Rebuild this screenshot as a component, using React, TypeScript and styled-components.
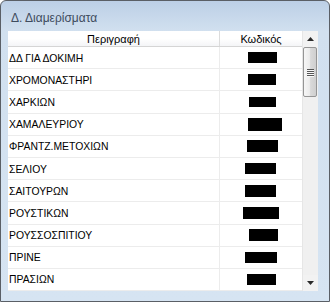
import React from "react";
import styled, { createGlobalStyle } from "styled-components";

const Global = createGlobalStyle`
  html, body { margin: 0; padding: 0; background: #ffffff; overflow: hidden; }
  * { box-sizing: border-box; }
`;

const Window = styled.div`
  width: 330px;
  height: 302px;
  border: 1px solid #5a5f66;
  border-radius: 6px 6px 0 0;
  background: linear-gradient(to bottom, #bccfe6 0px, #d1e0ef 30px, #d6e4f2 100%);
  display: flex;
  flex-direction: column;
  overflow: hidden;
`;

const TitleBar = styled.div`
  height: 30px;
  display: flex;
  align-items: center;
  padding-left: 10px;
  padding-top: 4px;
`;

const Title = styled.span`
  font-family: "Liberation Sans", Arial, sans-serif;
  font-size: 12px;
  color: #3f4c5e;
`;

const Body = styled.div`
  flex: 1;
  display: flex;
  padding: 0 11px 10px 7px;
  min-height: 0;
`;

const Client = styled.div`
  flex: 1;
  display: flex;
  background: #ffffff;
  min-height: 0;
  overflow: hidden;
`;

const Grid = styled.div`
  flex: 1;
  display: flex;
  flex-direction: column;
  min-width: 0;
  overflow: hidden;
`;

const HeaderRow = styled.div`
  height: 16px;
  display: flex;
  background: linear-gradient(to bottom, #ffffff 0%, #ffffff 50%, #f4f5f7 100%);
  border-bottom: 1px solid #d5d5d5;
  flex-shrink: 0;
`;

const HeaderCell = styled.div<{ $w?: number }>`
  ${(p) => (p.$w ? `width: ${p.$w}px;` : "flex: 1;")}
  display: flex;
  align-items: center;
  justify-content: center;
  padding-top: 1px;
  font-family: "Liberation Sans", Arial, sans-serif;
  font-size: 11px;
  color: #000;
  border-right: 1px solid #dcdcdc;
  &:last-child { border-right: none; }
`;

const Row = styled.div`
  height: 22.2px;
  flex-shrink: 0;
  display: flex;
  border-bottom: 1px solid #ececec;
`;

const DescCell = styled.div`
  width: 212px;
  display: flex;
  align-items: center;
  padding-left: 1px;
  padding-top: 1px;
  font-family: "Liberation Sans", Arial, sans-serif;
  font-size: 10.4px;
  color: #000;
  border-right: 1px solid #ececec;
  white-space: nowrap;
`;

const CodeCell = styled.div`
  flex: 1;
  display: flex;
  align-items: center;
`;

const Redact = styled.span<{ $x: number; $w: number; $h: number }>`
  display: block;
  margin-left: ${(p) => p.$x}px;
  width: ${(p) => p.$w}px;
  height: ${(p) => p.$h}px;
  background: #000;
`;

const ScrollBar = styled.div`
  width: 16px;
  display: flex;
  flex-direction: column;
  background: #f0f0f0;
  border-left: 1px solid #e6e6e6;
  flex-shrink: 0;
`;

const ArrowButton = styled.div`
  height: 16px;
  display: flex;
  align-items: center;
  justify-content: center;
  flex-shrink: 0;
  background: #f2f2f2;
`;

const Track = styled.div`
  flex: 1;
  display: flex;
  flex-direction: column;
`;

const Thumb = styled.div`
  height: 50px;
  margin: 0 1px 0 0;
  border: 1px solid #959595;
  border-radius: 2px;
  background: linear-gradient(to right, #f6f6f6 0%, #ececec 45%, #d9d9d9 55%, #cfcfcf 100%);
  display: flex;
  align-items: center;
  justify-content: center;
`;

const Grip = styled.div`
  display: flex;
  flex-direction: column;
  gap: 1px;
`;

const GripLine = styled.span`
  display: block;
  width: 7px;
  height: 1px;
  background: #555;
  box-shadow: 0 1px 0 #f8f8f8;
`;

const rows: { name: string; x: number; w: number; h: number }[] = [
  { name: "ΔΔ ΓΙΑ ΔΟΚΙΜΗ", x: 28, w: 29, h: 11 },
  { name: "ΧΡΟΜΟΝΑΣΤΗΡΙ", x: 28, w: 28, h: 11 },
  { name: "ΧΑΡΚΙΩΝ", x: 29, w: 27, h: 10 },
  { name: "ΧΑΜΑΛΕΥΡΙΟΥ", x: 28, w: 34, h: 13 },
  { name: "ΦΡΑΝΤΖ.ΜΕΤΟΧΙΩΝ", x: 27, w: 31, h: 12 },
  { name: "ΣΕΛΙΟΥ", x: 25, w: 31, h: 11 },
  { name: "ΣΑΙΤΟΥΡΩΝ", x: 25, w: 31, h: 12 },
  { name: "ΡΟΥΣΤΙΚΩΝ", x: 23, w: 36, h: 12 },
  { name: "ΡΟΥΣΣΟΣΠΙΤΙΟΥ", x: 29, w: 29, h: 12 },
  { name: "ΠΡΙΝΕ", x: 25, w: 32, h: 11 },
  { name: "ΠΡΑΣΙΩΝ", x: 27, w: 29, h: 11 },
];

const UpArrow = () => (
  <svg width="7" height="4" viewBox="0 0 7 4">
    <path d="M3.5 0 L7 4 L0 4 Z" fill="#2a2a2a" />
  </svg>
);

const DownArrow = () => (
  <svg width="7" height="4" viewBox="0 0 7 4">
    <path d="M0 0 L7 0 L3.5 4 Z" fill="#2a2a2a" />
  </svg>
);

export default function App() {
  return (
    <>
      <Global />
      <Window>
        <TitleBar>
          <Title>Δ. Διαμερίσματα</Title>
        </TitleBar>
        <Body>
          <Client>
            <Grid>
              <HeaderRow>
                <HeaderCell $w={212}>Περιγραφή</HeaderCell>
                <HeaderCell>Κωδικός</HeaderCell>
              </HeaderRow>
              {rows.map((r) => (
                <Row key={r.name}>
                  <DescCell>{r.name}</DescCell>
                  <CodeCell>
                    <Redact $x={r.x} $w={r.w} $h={r.h} />
                  </CodeCell>
                </Row>
              ))}
            </Grid>
            <ScrollBar>
              <ArrowButton>
                <UpArrow />
              </ArrowButton>
              <Track>
                <Thumb>
                  <Grip>
                    <GripLine />
                    <GripLine />
                    <GripLine />
                    <GripLine />
                  </Grip>
                </Thumb>
              </Track>
              <ArrowButton>
                <DownArrow />
              </ArrowButton>
            </ScrollBar>
          </Client>
        </Body>
      </Window>
    </>
  );
}
